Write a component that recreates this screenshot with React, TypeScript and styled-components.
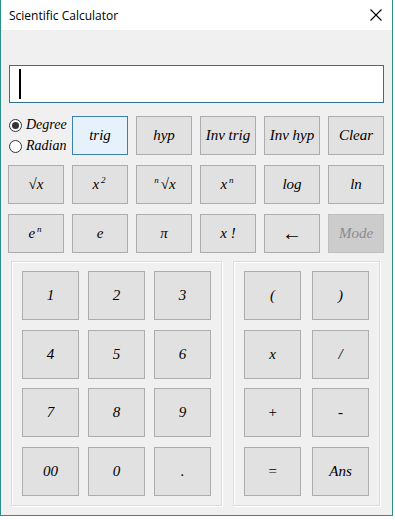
import styled, { createGlobalStyle, css } from 'styled-components';

const GlobalStyle = createGlobalStyle`
  html, body {
    margin: 0;
    padding: 0;
    background: #ffffff;
  }
`;

const Window = styled.div`
  width: 391px;
  height: 515px;
  border: 1px solid #2b8f88;
  border-top: none;
  display: flex;
  flex-direction: column;
  background: #f0f0f0;
`;

const TitleBar = styled.div`
  height: 30px;
  flex-shrink: 0;
  background: #ffffff;
  display: flex;
  align-items: center;
  justify-content: space-between;
  padding: 0 10px 0 8px;
  font-family: 'Open Sans', 'Noto Sans', sans-serif;
  font-size: 12px;
  color: #000;
`;

const Body = styled.div`
  flex: 1;
  display: flex;
  flex-direction: column;
  padding: 35px 7px 0 7px;
`;

const Display = styled.div`
  height: 36px;
  margin: 0 1px 13px 1px;
  background: #fff;
  border: 1px solid #2f7197;
  display: flex;
  align-items: center;
  padding-left: 9px;
`;

const Caret = styled.div`
  width: 2px;
  height: 30px;
  background: #000;
`;

const KeyRow = styled.div`
  display: grid;
  grid-template-columns: repeat(6, 56px);
  gap: 8px;
  margin-bottom: 10px;
`;

const scriptFont = css`
  font-family: 'Liberation Serif', 'DejaVu Serif', serif;
  font-style: italic;
`;

const Key = styled.button<{ $active?: boolean; $tall?: boolean }>`
  ${scriptFont};
  height: ${(p) => (p.$tall ? '49px' : '39px')};
  padding: 0;
  margin: 0;
  font-size: 15px;
  color: #000;
  background: ${(p) => (p.$active ? '#e5f1fb' : '#e1e1e1')};
  border: 1px solid ${(p) => (p.$active ? '#3c7fb1' : '#adadad')};
  display: flex;
  align-items: center;
  justify-content: center;
  &:disabled {
    background: #cccccc;
    border-color: #bfbfbf;
    color: #8a8a8a;
  }
`;

const Sup = styled.span`
  font-size: 9px;
  position: relative;
  top: -5px;
  margin: 0 2px;
`;

const RadioGroup = styled.div`
  ${scriptFont};
  font-size: 14px;
  display: flex;
  flex-direction: column;
  justify-content: center;
  gap: 5px;
  margin-left: 1px;
`;

const RadioItem = styled.label`
  display: flex;
  align-items: center;
  gap: 4px;
  white-space: nowrap;
`;

const RadioCircle = styled.span<{ $checked?: boolean }>`
  width: 11px;
  height: 11px;
  border: 1px solid #333;
  border-radius: 50%;
  background: #fff;
  display: flex;
  align-items: center;
  justify-content: center;
  flex-shrink: 0;
  &::after {
    content: '';
    width: 7px;
    height: 7px;
    border-radius: 50%;
    background: ${(p) => (p.$checked ? '#333' : 'transparent')};
  }
`;

const Groups = styled.div`
  display: flex;
  gap: 11px;
  margin: -2px 0 0 3px;
`;

const GroupBox = styled.div<{ $cols: number; $colGap: number }>`
  display: grid;
  grid-template-columns: repeat(${(p) => p.$cols}, 57px);
  column-gap: ${(p) => p.$colGap}px;
  row-gap: 9.5px;
  padding: 9px 10px 9px 10px;
  border: 1px solid #dcdcdc;
  box-shadow: inset 1px 1px 0 #ffffff, 1px 1px 0 #ffffff;
`;

const CloseIcon = () => (
  <svg width="12" height="12" viewBox="0 0 12 12">
    <path d="M0.5 0.5 L11.5 11.5 M11.5 0.5 L0.5 11.5" stroke="#000" strokeWidth="1.1" />
  </svg>
);

const numberKeys = ['1', '2', '3', '4', '5', '6', '7', '8', '9', '00', '0', '.'];
const operatorKeys = ['(', ')', 'x', '/', '+', '-', '=', 'Ans'];

export default function App() {
  return (
    <>
      <GlobalStyle />
      <Window>
        <TitleBar>
          <span>Scientific Calculator</span>
          <CloseIcon />
        </TitleBar>
        <Body>
          <Display>
            <Caret />
          </Display>

          <KeyRow>
            <RadioGroup>
              <RadioItem>
                <RadioCircle $checked />
                Degree
              </RadioItem>
              <RadioItem>
                <RadioCircle />
                Radian
              </RadioItem>
            </RadioGroup>
            <Key $active>trig</Key>
            <Key>hyp</Key>
            <Key>Inv trig</Key>
            <Key>Inv hyp</Key>
            <Key>Clear</Key>
          </KeyRow>

          <KeyRow>
            <Key>√x</Key>
            <Key>
              x<Sup>2</Sup>
            </Key>
            <Key>
              <Sup>n</Sup>√x
            </Key>
            <Key>
              x<Sup>n</Sup>
            </Key>
            <Key>log</Key>
            <Key>ln</Key>
          </KeyRow>

          <KeyRow>
            <Key>
              e<Sup>n</Sup>
            </Key>
            <Key>e</Key>
            <Key>π</Key>
            <Key>x !</Key>
            <Key style={{ fontStyle: 'normal', fontSize: '20px' }}>←</Key>
            <Key disabled>Mode</Key>
          </KeyRow>

          <Groups>
            <GroupBox $cols={3} $colGap={9}>
              {numberKeys.map((k) => (
                <Key key={k} $tall>
                  {k}
                </Key>
              ))}
            </GroupBox>
            <GroupBox $cols={2} $colGap={11}>
              {operatorKeys.map((k) => (
                <Key key={k} $tall>
                  {k}
                </Key>
              ))}
            </GroupBox>
          </Groups>
        </Body>
      </Window>
    </>
  );
}
